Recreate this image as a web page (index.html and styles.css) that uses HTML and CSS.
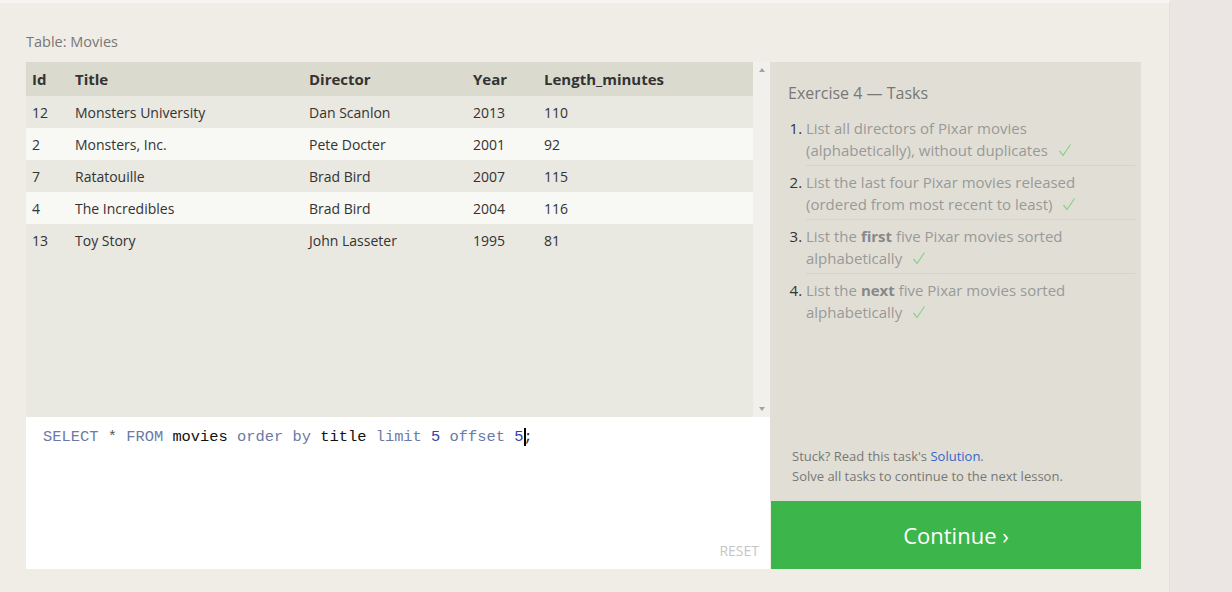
FILE: index.html
```html
<!DOCTYPE html>
<html lang="en">
<head>
<meta charset="utf-8">
<title>SQL Lesson — Exercise 4</title>
<link rel="stylesheet" href="styles.css">
</head>
<body>
<div class="card">
  <div class="table-label">Table: Movies</div>
  <div class="workspace">
    <div class="left">
      <div class="table-wrap">
        <div class="table-scroll">
          <table class="results">
            <colgroup>
              <col class="c-id"><col class="c-title"><col class="c-dir"><col class="c-year"><col>
            </colgroup>
            <thead>
              <tr><th>Id</th><th>Title</th><th>Director</th><th>Year</th><th>Length_minutes</th></tr>
            </thead>
            <tbody>
              <tr><td>12</td><td>Monsters University</td><td>Dan Scanlon</td><td>2013</td><td>110</td></tr>
              <tr><td>2</td><td>Monsters, Inc.</td><td>Pete Docter</td><td>2001</td><td>92</td></tr>
              <tr><td>7</td><td>Ratatouille</td><td>Brad Bird</td><td>2007</td><td>115</td></tr>
              <tr><td>4</td><td>The Incredibles</td><td>Brad Bird</td><td>2004</td><td>116</td></tr>
              <tr><td>13</td><td>Toy Story</td><td>John Lasseter</td><td>1995</td><td>81</td></tr>
            </tbody>
          </table>
        </div>
        <div class="scrollbar">
          <span class="arrow up"></span>
          <span class="arrow down"></span>
        </div>
      </div>
      <div class="editor">
        <div class="code"><span class="kw">SELECT</span> <span class="op">*</span> <span class="kw">FROM</span> <span class="id">movies</span> <span class="kw">order</span> <span class="kw">by</span> <span class="id">title</span> <span class="kw">limit</span> <span class="num">5</span> <span class="kw">offset</span> <span class="num">5</span><span class="cursor"></span><span class="punc">;</span></div>
        <span class="reset">RESET</span>
      </div>
    </div>
    <div class="right">
      <div class="tasks">
        <div class="tasks-title">Exercise 4 — Tasks</div>
        <ol class="task-list">
          <li><p class="task-text">List all directors of Pixar movies (alphabetically), without duplicates<svg class="check" viewBox="0 0 14 14" width="14" height="14"><polyline points="1.5,8 5,12.5 12.5,1.5"/></svg></p></li>
          <li><p class="task-text">List the last four Pixar movies released (ordered from most recent to least)<svg class="check" viewBox="0 0 14 14" width="14" height="14"><polyline points="1.5,8 5,12.5 12.5,1.5"/></svg></p></li>
          <li><p class="task-text">List the <b>first</b> five Pixar movies sorted alphabetically<svg class="check" viewBox="0 0 14 14" width="14" height="14"><polyline points="1.5,8 5,12.5 12.5,1.5"/></svg></p></li>
          <li><p class="task-text">List the <b>next</b> five Pixar movies sorted alphabetically<svg class="check" viewBox="0 0 14 14" width="14" height="14"><polyline points="1.5,8 5,12.5 12.5,1.5"/></svg></p></li>
        </ol>
        <div class="help">
          <p>Stuck? Read this task's <a href="#">Solution</a>.</p>
          <p>Solve all tasks to continue to the next lesson.</p>
        </div>
      </div>
      <a class="continue" href="#">Continue ›</a>
    </div>
  </div>
</div>
</body>
</html>
```

FILE: styles.css
```css
* { box-sizing: border-box; }

html, body {
  margin: 0;
  padding: 0;
}

body {
  background: #ebe6e3;
  font-family: "Open Sans", "Noto Sans", sans-serif;
  color: #333;
  height: 592px;
  overflow: hidden;
}

.card {
  width: 1170px;
  height: 592px;
  background: #efede6;
  border-top: 3px solid #f6f4f1;
  border-right: 1px solid #e4e1dc;
  padding: 29px 28px 0 26px;
}

.table-label {
  font-size: 14.5px;
  line-height: 20px;
  color: #777;
  margin-bottom: 10px;
}

.workspace {
  display: flex;
  height: 507px;
}

.left {
  width: 744px;
  flex: none;
  display: flex;
  flex-direction: column;
}

.table-wrap {
  height: 355px;
  display: flex;
  background: #e9e8e1;
}

.table-scroll {
  flex: 1;
}

.results {
  width: 100%;
  border-collapse: collapse;
  table-layout: fixed;
}

.c-id { width: 43px; }
.c-title { width: 234px; }
.c-dir { width: 164px; }
.c-year { width: 71px; }

.results th {
  background: #dbdacf;
  height: 34px;
  text-align: left;
  font-weight: 700;
  font-size: 15px;
  color: #333;
  padding: 0 6px;
}

.results td {
  height: 32px;
  font-size: 14px;
  color: #333;
  padding: 0 6px;
}

.results tbody tr { background: #e9e8e1; }
.results tbody tr:nth-child(even) { background: #f8f8f5; }

.scrollbar {
  width: 17px;
  background: #f1f0ec;
  display: flex;
  flex-direction: column;
  justify-content: space-between;
  align-items: center;
  padding: 6px 0 6px;
}

.arrow {
  width: 0;
  height: 0;
  border-left: 3.5px solid transparent;
  border-right: 3.5px solid transparent;
}
.arrow.up { border-bottom: 4px solid #a3a3a3; }
.arrow.down { border-top: 4px solid #a3a3a3; }

.editor {
  position: relative;
  flex: 1;
  background: #fff;
  padding: 11px 17px 10px;
}

.code {
  font-family: "Liberation Mono", "DejaVu Sans Mono", monospace;
  font-size: 15.4px;
  line-height: 18px;
  white-space: pre;
  color: #000;
}

.kw { color: #6b7aa6; }
.op { color: #555; }
.id { color: #111; }
.num { color: #3441a8; }
.punc { color: #333; }

.cursor {
  display: inline-block;
  width: 0;
  height: 18px;
  border-left: 2px solid #000;
  vertical-align: top;
  margin-right: -2px;
}

.reset {
  position: absolute;
  right: 11px;
  bottom: 9px;
  font-size: 14px;
  line-height: 18px;
  color: #c6c6c6;
}

.right {
  width: 371px;
  flex: none;
  display: flex;
  flex-direction: column;
}

.tasks {
  height: 439px;
  background: #e1dfd5;
  padding: 20px 6px 15px 18px;
  display: flex;
  flex-direction: column;
}

.tasks-title {
  font-size: 16px;
  line-height: 22px;
  color: #777;
  margin-bottom: 8px;
}

.task-list {
  margin: 0;
  padding: 0 0 0 18px;
  font-size: 15px;
  line-height: 22px;
}

.task-list li {
  padding: 5px 0 4px;
  color: #999;
}

.task-list li + li { border-top: 1px solid #d6d4ca; }

.task-list li::marker { color: #333; }

.task-text {
  margin: 0;
  max-width: 318px;
}

.task-text b {
  color: #888;
  font-weight: 700;
}

.check {
  margin-left: 10px;
  vertical-align: -1px;
  fill: none;
  stroke: #8fd08f;
  stroke-width: 1.3;
}

.help {
  margin-top: auto;
  padding-left: 4px;
  font-size: 13px;
  line-height: 20px;
  color: #777;
}

.help p { margin: 0; }

.help a {
  color: #3466c8;
  text-decoration: none;
}

.continue {
  flex: 1;
  margin-left: 1px;
  background: #3cb54b;
  color: #fff;
  font-size: 22px;
  text-decoration: none;
  display: flex;
  align-items: center;
  justify-content: center;
}
```
